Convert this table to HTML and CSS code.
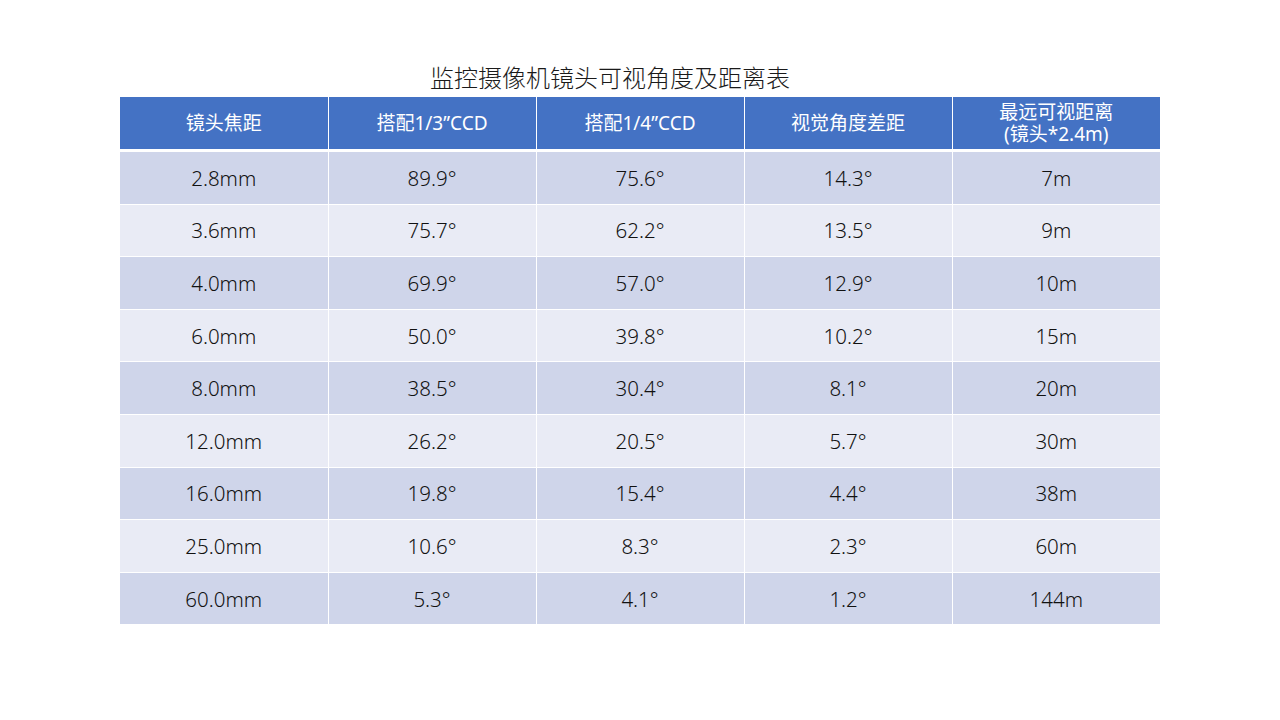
FILE: index.html
```html
<!DOCTYPE html>
<html lang="zh-CN">
<head>
<meta charset="utf-8">
<title>监控摄像机镜头可视角度及距离表</title>
<link rel="stylesheet" href="styles.css">
</head>
<body>
<main class="slide">
  <h1 class="title">监控摄像机镜头可视角度及距离表</h1>
  <table class="lens-table">
    <thead>
      <tr>
        <th>镜头焦距</th>
        <th>搭配1/3”CCD</th>
        <th>搭配1/4”CCD</th>
        <th>视觉角度差距</th>
        <th class="two-line"><span class="hl">最远可视距离</span><span class="hl">(镜头*2.4m)</span></th>
      </tr>
    </thead>
    <tbody>
      <tr class="dark"><td>2.8mm</td><td>89.9°</td><td>75.6°</td><td>14.3°</td><td>7m</td></tr>
      <tr class="light"><td>3.6mm</td><td>75.7°</td><td>62.2°</td><td>13.5°</td><td>9m</td></tr>
      <tr class="dark"><td>4.0mm</td><td>69.9°</td><td>57.0°</td><td>12.9°</td><td>10m</td></tr>
      <tr class="light"><td>6.0mm</td><td>50.0°</td><td>39.8°</td><td>10.2°</td><td>15m</td></tr>
      <tr class="dark"><td>8.0mm</td><td>38.5°</td><td>30.4°</td><td>8.1°</td><td>20m</td></tr>
      <tr class="light"><td>12.0mm</td><td>26.2°</td><td>20.5°</td><td>5.7°</td><td>30m</td></tr>
      <tr class="dark"><td>16.0mm</td><td>19.8°</td><td>15.4°</td><td>4.4°</td><td>38m</td></tr>
      <tr class="light"><td>25.0mm</td><td>10.6°</td><td>8.3°</td><td>2.3°</td><td>60m</td></tr>
      <tr class="dark"><td>60.0mm</td><td>5.3°</td><td>4.1°</td><td>1.2°</td><td>144m</td></tr>
    </tbody>
  </table>
</main>
</body>
</html>
```

FILE: styles.css
```css
html, body {
  margin: 0;
  padding: 0;
  background: #ffffff;
}

body {
  font-family: "Noto Sans", "Noto Sans CJK SC", sans-serif;
  color: #1a1a1a;
}

.slide {
  width: 1280px;
  height: 720px;
  box-sizing: border-box;
  padding: 61px 120px 0 120px;
  display: flex;
  flex-direction: column;
  align-items: center;
}

.title {
  margin: 0 60px 4px 0;
  font-family: "Noto Sans CJK SC", sans-serif;
  font-weight: 300;
  font-size: 24px;
  line-height: 32px;
  height: 32px;
  color: #1a1a1a;
  text-align: center;
}

.lens-table {
  width: 1040px;
  border-collapse: collapse;
  table-layout: fixed;
}

.lens-table th,
.lens-table td {
  border-left: 1px solid #ffffff;
  border-right: 1px solid #ffffff;
  text-align: center;
  vertical-align: middle;
  padding: 0;
}

.lens-table tr > *:first-child {
  border-left: none;
}

.lens-table tr > *:last-child {
  border-right: none;
}

.lens-table th {
  background: #4472c4;
  color: #ffffff;
  font-family: "Noto Sans", "Noto Sans CJK SC", sans-serif;
  font-weight: 400;
  font-size: 19px;
  line-height: 22px;
  height: 52px;
  border-bottom: 3px solid #ffffff;
}

.lens-table th.two-line .hl {
  display: block;
  line-height: 22px;
  height: 22px;
  overflow: visible;
}

.lens-table td {
  font-size: 20.5px;
  font-weight: 300;
  line-height: 24px;
  height: 51.6px;
  border-top: 1px solid #ffffff;
  color: #111111;
}

.lens-table tbody tr:first-child td {
  border-top: none;
}

.lens-table tr.dark td {
  background: #cfd5ea;
}

.lens-table tr.light td {
  background: #e9ebf5;
}
```
